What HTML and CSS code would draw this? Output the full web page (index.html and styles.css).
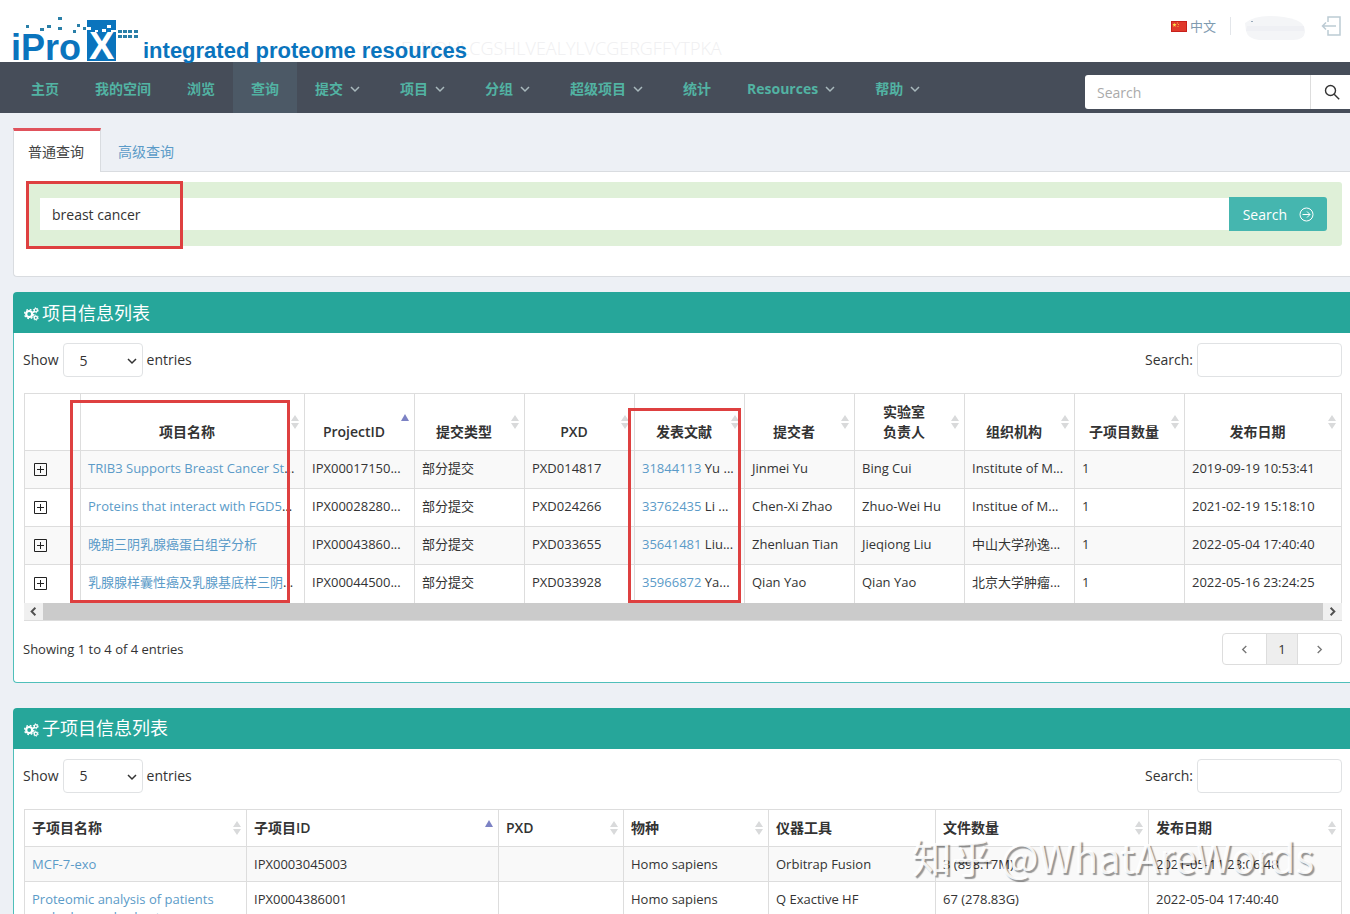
FILE: index.html
```html
<!DOCTYPE html>
<html lang="zh-CN">
<head>
<meta charset="utf-8">
<title>iProX - 查询</title>
<link rel="stylesheet" href="styles.css">
</head>
<body>
<svg class="defs" aria-hidden="true">
  <symbol id="chev" viewBox="0 0 10 10"><path d="M1 3l4 4 4-4" fill="none" stroke="currentColor" stroke-width="1.5"/></symbol>
  <symbol id="sort" viewBox="0 0 10 16"><path d="M5 1l4 6H1zM5 15l4-6H1z" fill="#d9dadb"/></symbol>
  <symbol id="asc" viewBox="0 0 10 16"><path d="M5 0l4 7H1z" fill="#7c82c4"/></symbol>
  <symbol id="plus" viewBox="0 0 13 13"><path d="M.5.5h12v12H.5zM3 6.500h7M6.500 3v7" fill="none" stroke="#222"/></symbol>
  <symbol id="cogs" viewBox="0 0 15 14">
    <circle cx="5.200" cy="7" r="3" fill="none" stroke="#fff" stroke-width="2.200"/>
    <circle cx="5.200" cy="7" r="4.600" fill="none" stroke="#fff" stroke-width="1.400" stroke-dasharray="1.800 1.812"/>
    <circle cx="11.800" cy="3.300" r="1.600" fill="none" stroke="#fff" stroke-width="1.300"/>
    <circle cx="11.800" cy="3.300" r="2.500" fill="none" stroke="#fff" stroke-dasharray="1.200 1.418"/>
    <circle cx="11.800" cy="10.700" r="1.600" fill="none" stroke="#fff" stroke-width="1.300"/>
    <circle cx="11.800" cy="10.700" r="2.500" fill="none" stroke="#fff" stroke-dasharray="1.200 1.418"/>
  </symbol>
</svg>
<div class="page">
  <header class="top">
    <span class="ghost" aria-hidden="true">FVNQHLCGSHLVEALYLVCGERGFFYTPKA</span>
    <a class="logo" href="#">
      <svg width="456" height="46" viewBox="0 0 456 46" role="img" aria-label="iProX integrated proteome resources">
        <rect x="75" y="4" width="29" height="41" fill="#0a74bd"/>
        <g class="brand">
          <text x="-1" y="44" font-size="36">iPro</text>
          <text x="131" y="42" font-size="22">integrated proteome resources</text>
          <text class="brand-x" x="77" y="43" font-size="38">X</text>
        </g>
        <g fill="#2a7fa8">
          <path d="M14 9h3v3h-3zM28 12h4v3h-4zM35 9h4v3h-4zM46 1h4v3h-4zM46 11h4v3h-4zM61 14h3v3h-3zM65 8h3v3h-3zM71 11h3v3h-3z"/>
          <path d="M106 14h4v3h-4zM111 14h4v3h-4zM116 14h4v3h-4zM122 14h4v3h-4zM106 19h4v3h-4zM111 19h4v3h-4zM116 19h4v3h-4zM122 19h4v3h-4z"/>
        </g>
        <path fill="#fff" d="M75 11h4v3h-4zM83 14h3v2h-3zM95 9h4v3h-4zM90 13h4v3h-4zM99 14h5v2h-5z"/>
      </svg>
    </a>
    <div class="user">
      <a class="lang" href="#">
        <svg width="16" height="11" viewBox="0 0 16 11"><rect width="16" height="11" fill="#c8201c"/><rect x="1" y="1" width="14" height="9" fill="#e03a2c"/><path d="M3 2l1 1h1.500L4.300 4.200l.5 1.600L3.400 5l-1.200.8.4-1.600L1.500 3H3z" fill="#fce04a"/><path d="M6 1.500h1v1H6zM7 3h1v1H7zM6.500 5h1v1h-1z" fill="#f8b03a"/></svg>
        <span>中文</span>
      </a>
      <i class="divider"></i>
      <svg class="masked" width="62" height="26" viewBox="0 0 62 26"><path d="M1 8Q10 1 25 1t27 4q10 4 9 12-1 8-12 8H15Q4 24 2 16z" fill="#f4f5f7"/><path d="M3 11h57v5H2z" fill="#eff0f4"/><path d="M7 6h2v1H7z" fill="#9ab"/></svg>
      <a class="logout" href="#" aria-label="退出"><svg width="20" height="20" viewBox="0 0 20 20" fill="none" stroke="#bccbd4" stroke-width="1.500"><path d="M7 6V1h12v18H7v-5M15 10H1.500M5 6.500L1.500 10 5 13.500"/></svg></a>
    </div>
  </header>

  <nav class="nav">
    <a href="#">主页</a><a href="#">我的空间</a><a href="#">浏览</a><a href="#" class="on">查询</a>
    <a href="#" class="drop">提交<svg><use href="#chev"/></svg></a>
    <a href="#" class="drop">项目<svg><use href="#chev"/></svg></a>
    <a href="#" class="drop">分组<svg><use href="#chev"/></svg></a>
    <a href="#" class="drop">超级项目<svg><use href="#chev"/></svg></a>
    <a href="#">统计</a>
    <a href="#" class="drop">Resources<svg><use href="#chev"/></svg></a>
    <a href="#" class="drop">帮助<svg><use href="#chev"/></svg></a>
    <form class="site-search">
      <input type="text" placeholder="Search" aria-label="Search">
      <button type="button" aria-label="Search"><svg width="16" height="16" viewBox="0 0 16 16" fill="none" stroke="#333" stroke-width="1.400"><circle cx="6.500" cy="6.500" r="5"/><path d="M10.200 10.200l5 5"/></svg></button>
    </form>
  </nav>

  <main class="main">
    <div class="tabs"><a href="#" class="tab active">普通查询</a><a href="#" class="tab">高级查询</a></div>
    <section class="tab-body">
      <form class="query">
        <input type="text" value="breast cancer" aria-label="查询">
        <button type="button">Search <svg width="15" height="15" viewBox="0 0 15 15" fill="none" stroke="#fff"><circle cx="7.500" cy="7.500" r="6.500"/><path d="M3.500 7.500h7.500M8 4.500l3 3-3 3"/></svg></button>
        <i class="mark mark-query"></i>
      </form>
    </section>

    <section class="panel">
      <h2 class="panel-head"><svg width="15" height="14"><use href="#cogs"/></svg>项目信息列表</h2>
      <div class="panel-body">
        <div class="tools">
          <label>Show <span class="pick"><select><option>5</option></select><svg><use href="#chev"/></svg></span> entries</label>
          <label>Search: <input type="search"></label>
        </div>
        <div class="table-wrap">
          <table class="grid projects">
            <colgroup><col class="w-plus"><col class="w-name"><col span="8" class="w-std"><col></colgroup>
            <thead><tr>
              <th></th>
              <th>项目名称<svg><use href="#sort"/></svg></th>
              <th>ProjectID<svg><use href="#asc"/></svg></th>
              <th>提交类型<svg><use href="#sort"/></svg></th>
              <th>PXD<svg><use href="#sort"/></svg></th>
              <th>发表文献<svg><use href="#sort"/></svg></th>
              <th>提交者<svg><use href="#sort"/></svg></th>
              <th>实验室<br>负责人<svg><use href="#sort"/></svg></th>
              <th>组织机构<svg><use href="#sort"/></svg></th>
              <th>子项目数量<svg><use href="#sort"/></svg></th>
              <th>发布日期<svg><use href="#sort"/></svg></th>
            </tr></thead>
            <tbody>
              <tr><td><button class="more" aria-label="展开"><svg><use href="#plus"/></svg></button></td><td><a href="#">TRIB3 Supports Breast Cancer St</a>...</td><td>IPX00017150...</td><td>部分提交</td><td>PXD014817</td><td><a href="#">31844113</a> Yu ...</td><td>Jinmei Yu</td><td>Bing Cui</td><td>Institute of M...</td><td>1</td><td>2019-09-19 10:53:41</td></tr>
              <tr><td><button class="more" aria-label="展开"><svg><use href="#plus"/></svg></button></td><td><a href="#">Proteins that interact with FGD5</a>...</td><td>IPX00028280...</td><td>部分提交</td><td>PXD024266</td><td><a href="#">33762435</a> Li ...</td><td>Chen-Xi Zhao</td><td>Zhuo-Wei Hu</td><td>Institue of M...</td><td>1</td><td>2021-02-19 15:18:10</td></tr>
              <tr><td><button class="more" aria-label="展开"><svg><use href="#plus"/></svg></button></td><td><a href="#">晚期三阴乳腺癌蛋白组学分析</a></td><td>IPX00043860...</td><td>部分提交</td><td>PXD033655</td><td><a href="#">35641481</a> Liu...</td><td>Zhenluan Tian</td><td>Jieqiong Liu</td><td>中山大学孙逸...</td><td>1</td><td>2022-05-04 17:40:40</td></tr>
              <tr><td><button class="more" aria-label="展开"><svg><use href="#plus"/></svg></button></td><td><a href="#">乳腺腺样囊性癌及乳腺基底样三阴</a>...</td><td>IPX00044500...</td><td>部分提交</td><td>PXD033928</td><td><a href="#">35966872</a> Ya...</td><td>Qian Yao</td><td>Qian Yao</td><td>北京大学肿瘤...</td><td>1</td><td>2022-05-16 23:24:25</td></tr>
            </tbody>
          </table>
          <div class="hscroll"><svg viewBox="0 0 18 18"><path d="M11 5L7 9l4 4"/></svg><svg viewBox="0 0 18 18"><path d="M7 5l4 4-4 4"/></svg></div>
          <i class="mark mark-name"></i>
          <i class="mark mark-paper"></i>
        </div>
        <div class="foot">
          <span>Showing 1 to 4 of 4 entries</span>
          <div class="pager">
            <button aria-label="Previous"><svg class="prev"><use href="#chev"/></svg></button><button class="current">1</button><button aria-label="Next"><svg class="next"><use href="#chev"/></svg></button>
          </div>
        </div>
      </div>
    </section>

    <section class="panel">
      <h2 class="panel-head"><svg width="15" height="14"><use href="#cogs"/></svg>子项目信息列表</h2>
      <div class="panel-body">
        <div class="tools">
          <label>Show <span class="pick"><select><option>5</option></select><svg><use href="#chev"/></svg></span> entries</label>
          <label>Search: <input type="search"></label>
        </div>
        <div class="table-wrap">
          <table class="grid subs">
            <colgroup><col class="s1"><col class="s2"><col class="s3"><col class="s4"><col class="s5"><col class="s6"><col></colgroup>
            <thead><tr>
              <th>子项目名称<svg><use href="#sort"/></svg></th>
              <th>子项目ID<svg><use href="#asc"/></svg></th>
              <th>PXD<svg><use href="#sort"/></svg></th>
              <th>物种<svg><use href="#sort"/></svg></th>
              <th>仪器工具</th>
              <th>文件数量<svg><use href="#sort"/></svg></th>
              <th>发布日期<svg><use href="#sort"/></svg></th>
            </tr></thead>
            <tbody>
              <tr><td><a href="#">MCF-7-exo</a></td><td>IPX0003045003</td><td></td><td>Homo sapiens</td><td>Orbitrap Fusion</td><td>3 (898.17M)</td><td>2021-05-11 23:06:48</td></tr>
              <tr><td><a href="#">Proteomic analysis of patients and advanced cohort</a></td><td>IPX0004386001</td><td></td><td>Homo sapiens</td><td>Q Exactive HF</td><td>67 (278.83G)</td><td>2022-05-04 17:40:40</td></tr>
            </tbody>
          </table>
          <span class="watermark">知乎 @WhatAreWords</span>
        </div>
      </div>
    </section>
  </main>
</div>
</body>
</html>
```
FILE: styles.css
```css
* { box-sizing: border-box; }
body {
  margin: 0;
  background: #edf0f5;
  color: #333;
  font: 14px/20px "Open Sans", "Noto Sans CJK SC", sans-serif;
}
a { color: #5b9bc8; text-decoration: none; }
input, select, button { font: inherit; color: inherit; }
.defs { display: none; }
.page { height: 100vh; overflow-x: hidden; overflow-y: auto; scrollbar-width: none; }

.top {
  position: relative;
  display: flex;
  justify-content: space-between;
  height: 62px;
  padding: 16px 9px 0 12px;
  background: #fff;
}
.logo { position: relative; height: 46px; }
.logo svg { overflow: visible; }
.brand { fill: #0a74bd; font-family: "Liberation Sans", sans-serif; font-weight: 700; }
.brand-x { fill: #fff; }
.ghost {
  position: absolute;
  left: 401px;
  top: 36px;
  color: #efeff1;
  font: 300 18px/24px "Open Sans", sans-serif;
}
.user { display: flex; align-items: center; height: 20px; }
.lang { display: flex; align-items: center; gap: 3px; color: #7f9bb0; font-size: 13px; }
.divider { width: 1px; height: 18px; margin: 0 13px 0 14px; background: #e3e6ea; }
.masked { margin-right: 15px; margin-top: 4px; }
.logout { display: flex; }

.nav { display: flex; height: 51px; background: #464d59; }
.nav::before { content: ""; width: 13px; }
.nav a {
  display: flex;
  align-items: center;
  padding: 3px 18px 0;
  color: #52b3a3;
  font-weight: 700;
}
.nav a.drop { padding-right: 39px; }
.nav a.on { background: #4c5966; }
.nav a svg { width: 10px; height: 10px; margin: 0 -17px 0 7px; color: #a9b9bd; }
.site-search { display: flex; width: 265px; height: 34px; margin: 13px 0 0 auto; }
.site-search input {
  flex: 1;
  min-width: 0;
  padding: 2px 12px 0;
  border: 0;
  border-radius: 3px 0 0 3px;
  background: #fff;
}
.site-search input::placeholder { color: #aaa; opacity: 1; }
.site-search button {
  display: flex;
  align-items: center;
  width: 40px;
  padding: 0 0 0 13px;
  border: 0;
  border-left: 1px solid #ddd;
  background: #fff;
}

.main { padding: 15px 0 0 13px; }
.tabs { display: flex; height: 43px; }
.tab { padding: 14px 16px 0 17px; }
.tab.active {
  position: relative;
  z-index: 1;
  height: 44px;
  padding: 11px 16px 0 14px;
  border: 1px solid #d9dce0;
  border-top: 3px solid #e0525c;
  border-bottom: 0;
  background: #fff;
  color: #444;
}
.tab-body {
  height: 106px;
  padding: 10px 8px 0 12px;
  border: 1px solid #d9dce0;
  border-right: 0;
  border-radius: 0 0 0 4px;
  background: #fff;
}
.query {
  position: relative;
  display: flex;
  align-items: center;
  padding: 15px 15px 15px 14px;
  border-radius: 3px;
  background: #dff0d8;
}
.query input { flex: 1; height: 32px; padding: 0 12px; border: 0; background: #fff; }
.query button {
  display: flex;
  align-items: center;
  gap: 12px;
  height: 34px;
  padding: 1px 13px 0 14px;
  border: 0;
  border-radius: 0 3px 3px 0;
  background: #45b6af;
  color: #fff;
}
.mark { position: absolute; border: 3px solid #de4040; }
.mark-query { left: 0; top: -1px; width: 157px; height: 68px; }
.mark-name { left: 46px; top: 7px; width: 220px; height: 203px; }
.mark-paper { left: 604px; top: 15px; width: 113px; height: 195px; }

.panel { margin: 15px 0 25px; border-radius: 4px 0 0 4px; background: #fff; }
.panel-head {
  display: flex;
  align-items: center;
  gap: 3px;
  height: 41px;
  margin: 0;
  padding: 0 0 0 11px;
  border-radius: 4px 0 0 0;
  background: #26a69a;
  color: #fff;
  font-size: 18px;
  font-weight: 400;
}
.panel-head svg { margin-top: 3px; }
.panel-body {
  padding: 10px 8px 17px 9px;
  border: 1px solid #4fbfba;
  border-width: 0 0 1px 1px;
  border-radius: 0 0 0 4px;
}
.tools { display: flex; justify-content: space-between; margin-bottom: 16px; }
.tools label { display: flex; align-items: center; gap: 4px; }
.pick { position: relative; display: flex; }
.pick select {
  appearance: none;
  width: 80px;
  height: 34px;
  padding: 1px 16px 0;
  border: 1px solid #e0e2e4;
  border-radius: 4px;
  background: #fff;
}
.pick svg { position: absolute; right: 6px; top: 13px; width: 10px; height: 10px; pointer-events: none; }
.tools input { width: 145px; height: 34px; border: 1px solid #e0e2e4; border-radius: 4px; background: #fff; }

.table-wrap { position: relative; margin-left: 1px; }
.grid { width: 100%; border-collapse: collapse; table-layout: fixed; font-size: 13px; line-height: 18px; }
.grid th, .grid td { border: 1px solid #ddd; padding: 8px 8px 8px 7px; text-align: left; }
.grid th { position: relative; font-size: 14px; line-height: 20px; font-weight: 600; }
.grid th svg { position: absolute; right: 4px; top: 50%; width: 10px; height: 16px; margin-top: -8px; }
.grid tbody tr:nth-child(odd) { background: #f9f9f9; }
.grid.projects th { padding-right: 18px; text-align: center; vertical-align: bottom; }
.grid.projects td { height: 38px; white-space: nowrap; padding: 7px 0 10px 7px; }
.grid.projects tbody tr:last-child td { border-bottom: 0; }
.w-plus { width: 56px; }
.w-name { width: 224px; }
.w-std { width: 110px; }
.subs td { vertical-align: top; }
.s1 { width: 222px; }
.s2 { width: 252px; }
.s3 { width: 125px; }
.s4 { width: 145px; }
.s5 { width: 167px; }
.s6 { width: 213px; }
.more { display: flex; padding: 3px 0 0 2px; border: 0; background: none; }
.more svg { width: 13px; height: 13px; }
.hscroll { display: flex; justify-content: space-between; height: 18px; background: #cbcbcb; border-bottom: 1px solid #ddd; }
.hscroll svg { width: 19px; height: 17px; background: #f0f0f0; fill: none; stroke: #505050; stroke-width: 2; }

.foot { display: flex; justify-content: space-between; align-items: center; margin-top: 12px; font-size: 13px; }
.pager { display: flex; border: 1px solid #ddd; border-radius: 4px; background: #fff; }
.pager button { width: 43px; height: 30px; padding: 0; border: 0; background: none; }
.pager .current { width: 32px; border: 1px solid #ddd; border-width: 0 1px; background: #eee; }
.pager svg { width: 9px; height: 9px; color: #777; }
.prev { transform: rotate(90deg); }
.next { transform: rotate(-90deg); }
.watermark {
  position: absolute;
  right: 28px;
  top: 23px;
  color: rgba(255, 255, 255, 0.9);
  font: 40px/48px "Noto Sans CJK SC", sans-serif;
  text-shadow: 2px 2px 1px rgba(0, 0, 0, 0.4);
  white-space: nowrap;
  pointer-events: none;
}
```
